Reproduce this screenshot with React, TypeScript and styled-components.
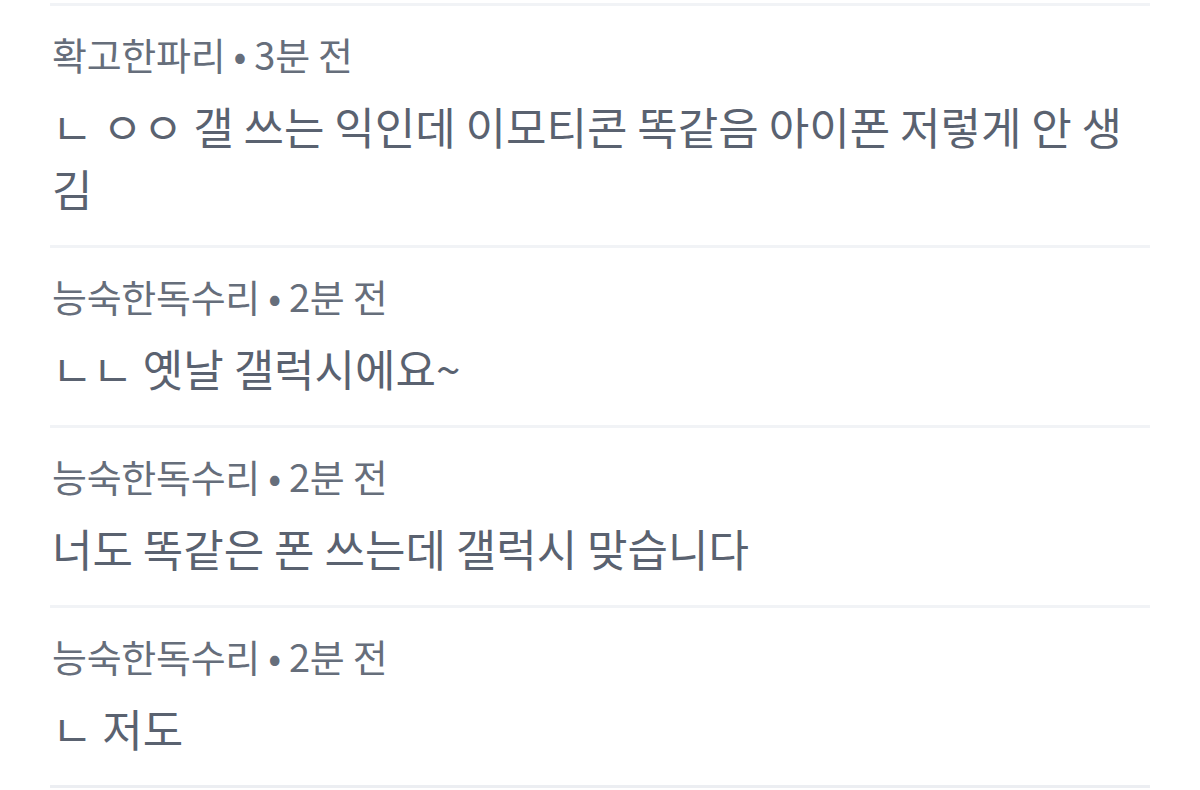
import React from "react";
import styled, { createGlobalStyle } from "styled-components";

const GlobalStyle = createGlobalStyle`
  html, body {
    margin: 0;
    padding: 0;
    background: #ffffff;
  }
  body {
    font-family: "Noto Sans CJK KR", "Noto Sans", sans-serif;
  }
`;

const Page = styled.div`
  width: 1200px;
  height: 790px;
  overflow: hidden;
  background: #ffffff;
  padding: 3px 50px 0 50px;
  box-sizing: border-box;
`;

const List = styled.ul`
  list-style: none;
  margin: 0;
  padding: 0;
  display: flex;
  flex-direction: column;
`;

const Item = styled.li`
  border-top: 3px solid #f1f3f6;
  padding: 26px 0 26px 2px;
  display: flex;
  flex-direction: column;
  gap: 19px;
  &:last-child {
    border-bottom: 3px solid #eceef2;
  }
`;

const Meta = styled.div`
  font-size: 38px;
  line-height: 44px;
  color: #666e7b;
  white-space: nowrap;
  letter-spacing: -0.3px;
`;

const Content = styled.p`
  margin: 0;
  font-size: 44px;
  line-height: 62px;
  color: #5a6270;
  word-break: normal;
`;

type Comment = { author: string; time: string; text: string };

const comments: Comment[] = [
  {
    author: "확고한파리",
    time: "3분 전",
    text: "ㄴ ㅇㅇ 갤 쓰는 익인데 이모티콘 똑같음 아이폰 저렇게 안 생김",
  },
  { author: "능숙한독수리", time: "2분 전", text: "ㄴㄴ 옛날 갤럭시에요~" },
  { author: "능숙한독수리", time: "2분 전", text: "너도 똑같은 폰 쓰는데 갤럭시 맞습니다" },
  { author: "능숙한독수리", time: "2분 전", text: "ㄴ 저도" },
];

export default function App() {
  return (
    <>
      <GlobalStyle />
      <Page>
        <List>
          {comments.map((c, i) => (
            <Item key={i}>
              <Meta>
                {c.author} • {c.time}
              </Meta>
              <Content>{c.text}</Content>
            </Item>
          ))}
        </List>
      </Page>
    </>
  );
}
